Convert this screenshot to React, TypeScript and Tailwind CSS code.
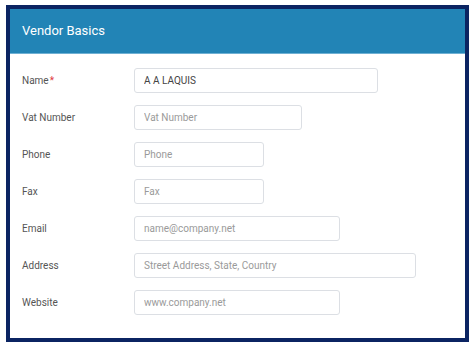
import React from 'react';

type Field = {
  label: string;
  width: string;
  value?: string;
  placeholder?: string;
  required?: boolean;
};

const fields: Field[] = [
  { label: 'Name', width: 'w-[244px]', value: 'A A LAQUIS', required: true },
  { label: 'Vat Number', width: 'w-[168px]', placeholder: 'Vat Number' },
  { label: 'Phone', width: 'w-[130px]', placeholder: 'Phone' },
  { label: 'Fax', width: 'w-[130px]', placeholder: 'Fax' },
  { label: 'Email', width: 'w-[206px]', placeholder: 'name@company.net' },
  { label: 'Address', width: 'w-[282px]', placeholder: 'Street Address, State, Country' },
  { label: 'Website', width: 'w-[206px]', placeholder: 'www.company.net' },
];

export default function App() {
  return (
    <div className="w-[476px] h-[349px] bg-white pt-[5px] pl-[6px] font-['Roboto',sans-serif]">
      <div className="w-[463px] h-[337px] border-4 border-[#0b2462] bg-white flex flex-col">
        {/* Header */}
        <div className="h-[45px] bg-[#2284b6] border-b border-[#6fb0d3] flex items-center px-3">
          <h2 className="text-[13px] text-white">Vendor Basics</h2>
        </div>

        <form className="flex flex-col gap-3 px-3 pt-[14px]">
          {fields.map(f => (
            <div key={f.label} className="flex items-center h-[25px]">
              <label className="w-[112px] shrink-0 text-[10px] text-[#555]">
                {f.label}
                {f.required && <span className="text-[#e0393e] ml-[1px]">*</span>}
              </label>
              <input
                type="text"
                defaultValue={f.value}
                placeholder={f.placeholder}
                className={`${f.width} h-[25px] border border-[#dcdfe4] rounded-[3px] px-[9px] text-[10px] text-[#444] placeholder:text-[#9a9a9a] focus:outline-none`}
              />
            </div>
          ))}
        </form>
      </div>
    </div>
  );
}
